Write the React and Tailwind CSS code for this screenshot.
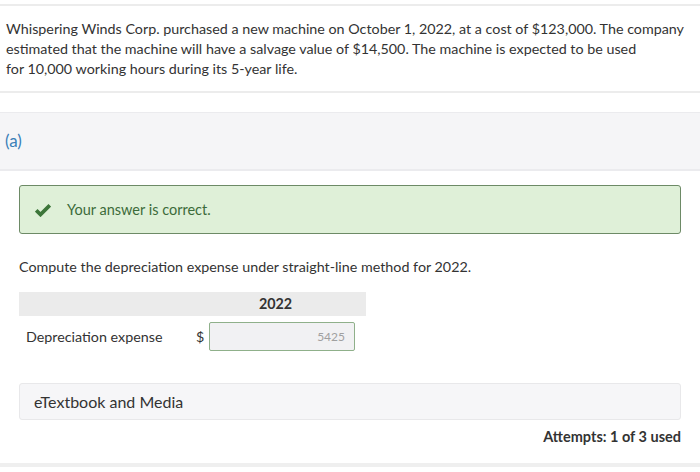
export default function App() {
  return (
    <div
      className="w-[700px] h-[472px] bg-white overflow-hidden text-[#333]"
      style={{ fontFamily: "Lato, 'Liberation Sans', sans-serif" }}
    >
      {/* QUESTION TEXT */}
      <div className="mt-[4px] border-t-2 border-b-2 border-[#ececec] px-[6px] pt-[13px] pb-[12px] text-[14.3px] leading-[20px]">
        Whispering Winds Corp. purchased a new machine on October 1, 2022, at a cost of $123,000. The company
        <br />
        estimated that the machine will have a salvage value of $14,500. The machine is expected to be used
        <br />
        for 10,000 working hours during its 5-year life.
      </div>

      {/* PART HEADER */}
      <div className="mt-[19px] h-[59px] bg-[#f5f5f7] border-t border-b-2 border-[#ebebee] flex items-center px-[5px] text-[17px] text-[#3a7fb8]">
        (a)
      </div>

      <div className="px-[19px]">
        {/* CORRECT BANNER */}
        <div className="mt-[14px] h-[49px] bg-[#dff0d8] border border-[#6d8a66] rounded-[3px] flex items-center text-[14.5px] text-[#3c6b3a]">
          <svg className="ml-[15px] w-[16px] h-[14px]" viewBox="0 0 16 13">
            <path d="M1.2 6.8 L5.5 11 L14.8 1.8" fill="none" stroke="#3d763a" strokeWidth="3.8" />
          </svg>
          <span className="ml-[16px]">Your answer is correct.</span>
        </div>

        <div className="mt-[23px] text-[14.3px] leading-[20px]">
          Compute the depreciation expense under straight-line method for 2022.
        </div>

        {/* TABLE */}
        <div className="mt-[15px] w-[347px]">
          <div className="h-[24px] bg-[#ebebeb] flex">
            <div className="w-[183px]" />
            <div className="w-[147px] flex items-center justify-center text-[14.3px] font-bold">2022</div>
          </div>
          <div className="flex items-center mt-[6px]">
            <div className="w-[177px] pl-[7px] text-[14.3px]">Depreciation expense</div>
            <div className="w-[13px] text-[14.3px]">$</div>
            <div className="w-[146px] h-[29px] bg-[#f1f1f3] border border-[#8fb08a] rounded-[2px] flex items-center justify-end pr-[9px] text-[12px] text-[#a0a0a0]">
              5425
            </div>
          </div>
        </div>

        {/* ETEXTBOOK */}
        <div className="mt-[32px] h-[37px] bg-[#f6f6f8] border border-[#e8e8ea] rounded-[3px] flex items-center pl-[14px] text-[16px]">
          eTextbook and Media
        </div>

        <div className="mt-[6px] text-right text-[14.5px] font-bold">Attempts: 1 of 3 used</div>
      </div>

      <div className="mt-[15px] border-t-4 border-[#efefef]" />
    </div>
  );
}
